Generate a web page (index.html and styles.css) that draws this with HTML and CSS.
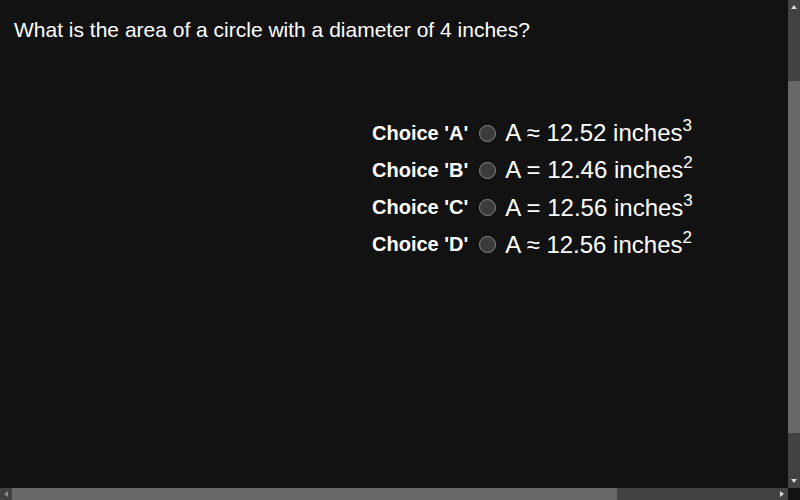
FILE: index.html
```html
<!DOCTYPE html>
<html lang="en">
<head>
<meta charset="utf-8">
<title>Quiz</title>
<link rel="stylesheet" href="styles.css">
</head>
<body>
<div class="page">
  <p class="question">What is the area of a circle with a diameter of 4 inches?</p>
  <div class="choices">
    <label class="choice"><span class="tag">Choice 'A'</span><input type="radio" name="q" class="radio"><span class="answer">A ≈ 12.52 inches<sup>3</sup></span></label>
    <label class="choice"><span class="tag">Choice 'B'</span><input type="radio" name="q" class="radio"><span class="answer">A = 12.46 inches<sup>2</sup></span></label>
    <label class="choice"><span class="tag">Choice 'C'</span><input type="radio" name="q" class="radio"><span class="answer">A = 12.56 inches<sup>3</sup></span></label>
    <label class="choice"><span class="tag">Choice 'D'</span><input type="radio" name="q" class="radio"><span class="answer">A ≈ 12.56 inches<sup>2</sup></span></label>
  </div>
</div>
<div class="vscroll" aria-hidden="true">
  <span class="arrow arrow-up"></span>
  <span class="vthumb"></span>
  <span class="arrow arrow-down"></span>
</div>
<div class="hscroll" aria-hidden="true">
  <span class="arrow arrow-left"></span>
  <span class="hthumb"></span>
  <span class="arrow arrow-right"></span>
</div>
<div class="corner" aria-hidden="true"></div>
</body>
</html>
```
FILE: styles.css
```css
html {
  color-scheme: dark;
  background: #121212;
}
body {
  margin: 0;
  color: #ffffff;
  font-family: "Liberation Sans", Arial, sans-serif;
  overflow: hidden;
}
.page {
  width: 788px;
  height: 488px;
  box-sizing: border-box;
  padding: 18px 0 0 14px;
}
.question {
  margin: 0;
  font-size: 21px;
}
.choices {
  display: flex;
  flex-direction: column;
  gap: 9.3px;
  margin: 77px 0 0 358px;
}
.choice {
  display: flex;
  align-items: center;
  height: 28px;
}
.tag {
  font-weight: bold;
  font-size: 20px;
  margin-right: 11px;
}
.radio {
  width: 17px;
  height: 17px;
  margin: 0 9px 0 0;
}
.answer {
  font-size: 24px;
}
.answer sup {
  font-size: 17px;
  vertical-align: 10px;
  line-height: 0;
}

/* painted scrollbars */
.vscroll {
  position: fixed;
  top: 0;
  right: 0;
  width: 12px;
  height: 488px;
  background: #424242;
  display: flex;
  flex-direction: column;
  align-items: center;
}
.vthumb {
  display: block;
  width: 12px;
  height: 352px;
  margin: 69px 0 auto;
  background: #686868;
}
.hscroll {
  position: fixed;
  left: 0;
  bottom: 0;
  width: 788px;
  height: 12px;
  background: #424242;
  display: flex;
  align-items: center;
}
.hthumb {
  display: block;
  width: 605px;
  height: 12px;
  margin-right: auto;
  background: #686868;
}
.corner {
  position: fixed;
  right: 0;
  bottom: 0;
  width: 12px;
  height: 12px;
  background: #121212;
}
.arrow {
  display: block;
  width: 0;
  height: 0;
  flex: none;
}
.arrow-up {
  margin-top: 5px;
  margin-bottom: 3px;
  border-left: 3.5px solid transparent;
  border-right: 3.5px solid transparent;
  border-bottom: 4px solid #d8d8d8;
}
.arrow-down {
  margin-top: 0;
  margin-bottom: 5px;
  border-left: 3.5px solid transparent;
  border-right: 3.5px solid transparent;
  border-top: 4px solid #d8d8d8;
}
.arrow-left {
  margin-left: 4px;
  margin-right: 4px;
  border-top: 3.5px solid transparent;
  border-bottom: 3.5px solid transparent;
  border-right: 4px solid #8a8a8a;
}
.arrow-right {
  margin-left: 0;
  margin-right: 4px;
  border-top: 3.5px solid transparent;
  border-bottom: 3.5px solid transparent;
  border-left: 4px solid #d8d8d8;
}
```
